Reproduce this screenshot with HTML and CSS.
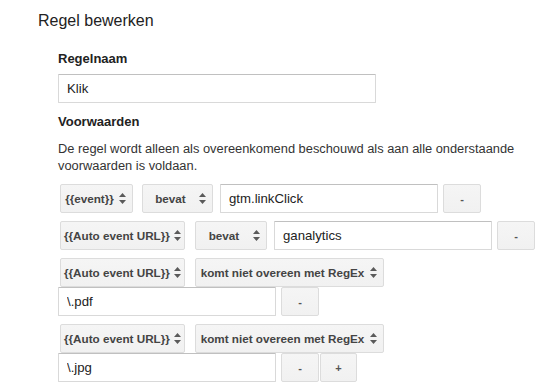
FILE: index.html
```html
<!DOCTYPE html>
<html lang="nl">
<head>
    <meta charset="UTF-8">
    <title>Regel bewerken</title>
    <link rel="stylesheet" href="styles.css">
</head>
<body>
    <div class="page">
        <h1 class="title">Regel bewerken</h1>
        <div class="content">
            <div class="field-label">Regelnaam</div>
            <input class="text-input name-input" type="text" value="Klik">

            <div class="field-label section-label">Voorwaarden</div>
            <p class="hint">De regel wordt alleen als overeenkomend beschouwd als aan alle onderstaande voorwaarden is voldaan.</p>

            <div class="condition">
                <div class="picker w-event"><span class="picker-text">{{event}}</span><span class="arrows"><svg width="7" height="11" viewBox="0 0 7 11"><path d="M3.5 0 7 4H0z M0 7h7l-3.5 4z" fill="#5a5a5a"/></svg></span></div>
                <div class="picker w-bevat"><span class="picker-text">bevat</span><span class="arrows"><svg width="7" height="11" viewBox="0 0 7 11"><path d="M3.5 0 7 4H0z M0 7h7l-3.5 4z" fill="#5a5a5a"/></svg></span></div>
                <input class="text-input value-input" type="text" value="gtm.linkClick">
                <button class="small-btn">-</button>
            </div>

            <div class="condition">
                <div class="picker w-auto"><span class="picker-text">{{Auto event URL}}</span><span class="arrows"><svg width="7" height="11" viewBox="0 0 7 11"><path d="M3.5 0 7 4H0z M0 7h7l-3.5 4z" fill="#5a5a5a"/></svg></span></div>
                <div class="picker w-bevat2"><span class="picker-text">bevat</span><span class="arrows"><svg width="7" height="11" viewBox="0 0 7 11"><path d="M3.5 0 7 4H0z M0 7h7l-3.5 4z" fill="#5a5a5a"/></svg></span></div>
                <input class="text-input value-input" type="text" value="ganalytics">
                <button class="small-btn">-</button>
            </div>

            <div class="condition">
                <div class="picker w-auto"><span class="picker-text">{{Auto event URL}}</span><span class="arrows"><svg width="7" height="11" viewBox="0 0 7 11"><path d="M3.5 0 7 4H0z M0 7h7l-3.5 4z" fill="#5a5a5a"/></svg></span></div>
                <div class="picker w-regex"><span class="picker-text">komt niet overeen met RegEx</span><span class="arrows"><svg width="7" height="11" viewBox="0 0 7 11"><path d="M3.5 0 7 4H0z M0 7h7l-3.5 4z" fill="#5a5a5a"/></svg></span></div>
                <input class="text-input value-input" type="text" value="\.pdf">
                <button class="small-btn">-</button>
            </div>

            <div class="condition">
                <div class="picker w-auto"><span class="picker-text">{{Auto event URL}}</span><span class="arrows"><svg width="7" height="11" viewBox="0 0 7 11"><path d="M3.5 0 7 4H0z M0 7h7l-3.5 4z" fill="#5a5a5a"/></svg></span></div>
                <div class="picker w-regex"><span class="picker-text">komt niet overeen met RegEx</span><span class="arrows"><svg width="7" height="11" viewBox="0 0 7 11"><path d="M3.5 0 7 4H0z M0 7h7l-3.5 4z" fill="#5a5a5a"/></svg></span></div>
                <input class="text-input value-input" type="text" value="\.jpg">
                <button class="small-btn">-</button>
                <button class="small-btn add-btn">+</button>
            </div>
        </div>
    </div>
</body>
</html>
```

FILE: styles.css
```css
body {
    margin: 0;
    font-family: 'Liberation Sans', Arial, sans-serif;
    color: #222;
    background: #fff;
}
.page {
    padding: 11px 0 0 38px;
}
.title {
    margin: 0;
    font-size: 16px;
    font-weight: normal;
    line-height: 20px;
}
.content {
    padding: 20px 0 0 20px;
}
.field-label {
    font-size: 13px;
    font-weight: bold;
    line-height: 16px;
}
.section-label {
    margin-top: 11px;
}
.text-input {
    display: block;
    box-sizing: border-box;
    height: 29px;
    margin: 0;
    padding: 0 8px;
    border: 1px solid #d9d9d9;
    border-top-color: #c0c0c0;
    border-radius: 1px;
    font-family: inherit;
    font-size: 13.2px;
    color: #222;
    background: #fff;
    outline: none;
}
.name-input {
    width: 318px;
    margin-top: 7px;
}
.hint {
    margin: 10px 0 10px 0;
    font-size: 12.85px;
    line-height: 17px;
    width: 470px;
    color: #333;
}
.condition {
    display: flex;
    flex-wrap: wrap;
    align-items: flex-start;
    width: 487px;
    margin-bottom: 8px;
}
.picker {
    display: flex;
    align-items: center;
    box-sizing: border-box;
    height: 29px;
    margin: 0 7px 0 2px;
    padding: 0 6px 0 3px;
    border: 1px solid #dcdcdc;
    border-radius: 2px;
    background: linear-gradient(#f5f5f5, #f1f1f1);
    font-size: 11.7px;
    font-weight: bold;
    color: #444;
    white-space: nowrap;
}
.picker-text {
    flex: 1;
    text-align: center;
}
.arrows {
    display: flex;
    margin-left: 4px;
}
.w-event { width: 73px; }
.w-bevat { width: 71px; }
.w-auto { width: 125px; }
.w-bevat2 { width: 72px; margin-left: 3px; }
.w-regex { width: 189px; margin-left: 3px; }
.value-input {
    width: 218px;
    margin-right: 5px;
}
.small-btn {
    box-sizing: border-box;
    width: 38px;
    height: 29px;
    margin: 0;
    padding: 0;
    border: 1px solid #dcdcdc;
    border-radius: 2px;
    background: linear-gradient(#f5f5f5, #f1f1f1);
    font-family: inherit;
    font-size: 11px;
    font-weight: bold;
    color: #555;
}
.add-btn {
    margin-left: 1px;
    width: 37px;
}
```
